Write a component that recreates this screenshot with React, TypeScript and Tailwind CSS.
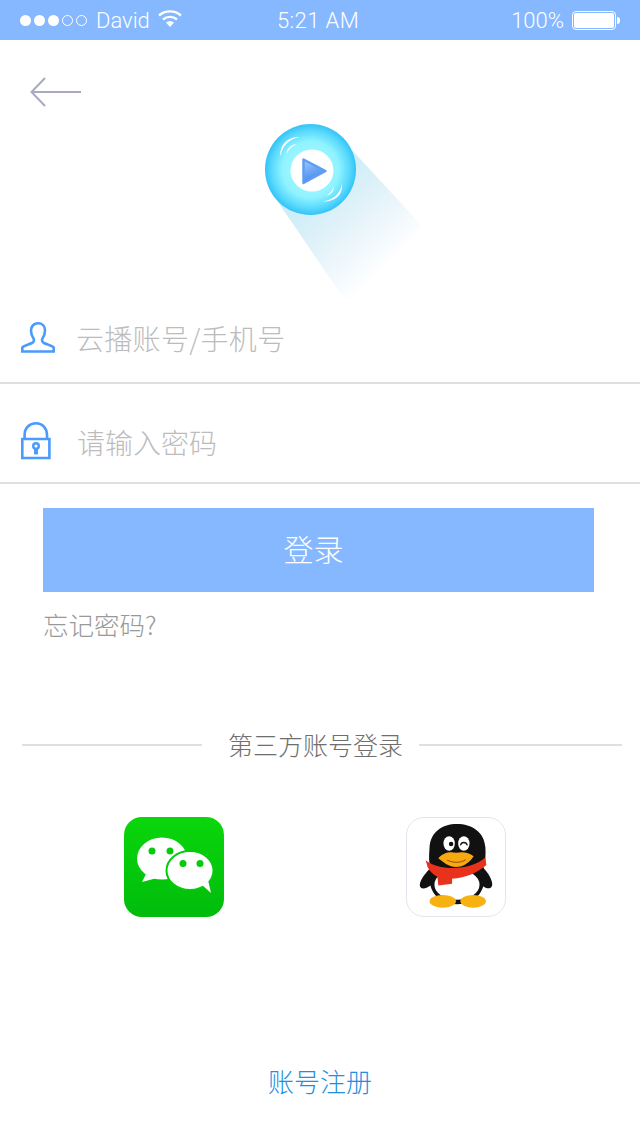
const CJK = "font-['Noto_Sans_CJK_SC','Liberation_Sans',sans-serif] font-light";

function StatusBar() {
  return (
    <div className="flex h-10 items-center bg-[#85b8ff] font-['Roboto','Liberation_Sans',sans-serif] text-[22px] font-light text-white">
      <div className="flex w-[200px] items-center pl-5">
        <div className="flex gap-[3px]">
          {[0, 1, 2].map((i) => (
            <span key={i} className="h-[11px] w-[11px] rounded-full bg-white" />
          ))}
          {[3, 4].map((i) => (
            <span key={i} className="h-[11px] w-[11px] rounded-full border border-white" />
          ))}
        </div>
        <span className="ml-[9px] mt-[2px] leading-none">David</span>
        <svg className="mb-[4px] ml-[8px]" width="24" height="18" viewBox="0 0 24 18" fill="none">
          <path d="M1 6.500C7 1 17 1 23 6.500" stroke="white" strokeWidth="2.400" />
          <path d="M5 10.500C9 7 15 7 19 10.500" stroke="white" strokeWidth="2.400" />
          <path d="M8 13.500C10.500 11.500 13.500 11.500 16 13.500L12 18Z" fill="white" />
        </svg>
      </div>
      <span className="ml-[77px] mt-[2px] leading-none tracking-[0.4px]">5:21 AM</span>
      <div className="ml-auto flex items-center pr-[20px]">
        <span className="mt-[2px] leading-none">100%</span>
        <div className="ml-[8px] h-[19px] w-[44px] rounded-[4px] border border-white p-[1px]">
          <div className="h-full w-full rounded-[2px] bg-white" />
        </div>
        <div className="ml-[1px] h-[7px] w-[3px] rounded-r-full bg-white" />
      </div>
    </div>
  );
}

function BackArrow() {
  return (
    <svg width="52" height="30" viewBox="0 0 52 30" fill="none" stroke="#a9a9c0" strokeWidth="2">
      <path d="M1 15H51" />
      <path d="M15 1L1.500 15L15 29" />
    </svg>
  );
}

function Logo() {
  return (
    <svg width="200" height="200" viewBox="240 110 200 200" className="ml-[240px]">
      <defs>
        <linearGradient id="beam" gradientUnits="userSpaceOnUse" x1="310" y1="185" x2="385" y2="270">
          <stop offset="0" stopColor="#c9edf8" />
          <stop offset="0.4" stopColor="#dff1f9" />
          <stop offset="1" stopColor="#ffffff" />
        </linearGradient>
        <radialGradient id="ball" cx="0.5" cy="0.5" r="0.5">
          <stop offset="0" stopColor="#b4f8ff" />
          <stop offset="0.62" stopColor="#8ff3ff" />
          <stop offset="0.86" stopColor="#58d8fc" />
          <stop offset="1" stopColor="#33c3f7" />
        </radialGradient>
        <linearGradient id="play" x1="0" y1="0" x2="0.35" y2="1">
          <stop offset="0" stopColor="#a5c9fa" />
          <stop offset="1" stopColor="#3f88ee" />
        </linearGradient>
      </defs>
      <path d="M352 150L422 226L346 302L278 202Z" fill="url(#beam)" />
      <circle cx="310.500" cy="169.500" r="45.500" fill="url(#ball)" />
      <ellipse cx="312" cy="170.500" rx="21.500" ry="21" fill="white" />
      <path
        d="M303.500 159.500L325.500 171L303.500 183Z"
        fill="url(#play)"
        stroke="#5f9df3"
        strokeWidth="2.500"
        strokeLinejoin="round"
      />
      <g fill="white">
        <path d="M280.500 156C279.500 145 287 137 299.500 137C289 139 282.500 146 280.500 156Z" />
        <path d="M286.500 154C286.500 148.500 291 144.500 297 144C292 146 288.500 149.500 286.500 154Z" />
        <path d="M342 184C343 195 335 202 322.500 201.500C333 200 340 194 342 184Z" />
        <path d="M334 186C334 191 331 195 326.500 195.500C330 193.500 332.500 190 334 186Z" />
      </g>
    </svg>
  );
}

function UserIcon() {
  return (
    <svg width="34" height="32" viewBox="0 0 34 32" fill="none" stroke="#4a9bfc" strokeWidth="2.600">
      <path d="M1.300 29.500V25.500C3 23.500 8 22.500 11 21C13 20 13.500 18 12.500 16.500C11 14.500 10 12 10 8.500C10 4 13 1.300 17 1.300C21 1.300 24 4 24 8.500C24 12 23 14.500 21.500 16.500C20.500 18 21 20 23 21C26 22.500 31 23.500 32.700 25.500V29.500Z" />
    </svg>
  );
}

function LockIcon() {
  return (
    <svg width="30" height="38" viewBox="0 0 30 38" fill="none">
      <path d="M1.300 17H28.400V36H1.300Z" stroke="#4a9bfc" strokeWidth="2.600" />
      <path d="M3.600 17V13C3.600 6 8.500 1.300 15 1.300C21.500 1.300 26 6 26 13V17" stroke="#4a9bfc" strokeWidth="2.600" />
      <circle cx="15" cy="24" r="4" fill="#4a9bfc" />
      <rect x="13" y="25" width="4" height="7.500" rx="1" fill="#4a9bfc" />
      <circle cx="15" cy="24" r="1.500" fill="white" />
    </svg>
  );
}

function WechatIcon() {
  return (
    <div className="h-[100px] w-[100px] overflow-hidden rounded-[18px] bg-gradient-to-b from-[#0bd60b] to-[#00bc0c]">
      <svg width="100" height="100" viewBox="0 0 100 100">
        <ellipse cx="38" cy="41.500" rx="25" ry="21" fill="white" />
        <path d="M22 57L18 65L33 61Z" fill="white" />
        <ellipse cx="66" cy="53.500" rx="23.500" ry="19.500" fill="white" stroke="#05cb0c" strokeWidth="2" />
        <path d="M77 67L87 76L84 63Z" fill="white" />
        <circle cx="28" cy="34" r="3.500" fill="#05cb0c" />
        <circle cx="46" cy="34" r="3.500" fill="#05cb0c" />
        <circle cx="59" cy="46.500" r="3.500" fill="#05cb0c" />
        <circle cx="76" cy="46.500" r="3.500" fill="#05cb0c" />
      </svg>
    </div>
  );
}

function QQIcon() {
  return (
    <div className="h-[100px] w-[100px] overflow-hidden rounded-[18px] border border-[#e2e6ec] bg-white">
      <svg width="98" height="98" viewBox="0 0 100 100">
        <path d="M25 50C19 56 13 63 13 69C14 74 20 72 25 68Z" fill="#111" />
        <path d="M77 50C83 56 87 63 87 68C86 74 80 72 76 68Z" fill="#111" />
        <path d="M23 30C24 14 36 6 51 6C66 6 79 14 80 30C80.500 38 80 44 78 50C83 72 72 88 51 88C30 88 19 72 24 50C22 44 22.500 38 23 30Z" fill="#111" />
        <ellipse cx="51" cy="68" rx="23" ry="15.500" fill="white" />
        <path d="M19 43C32 54 66 54 80 40L81 48C72 56 60 61 46 62L46 67L32 69L31 60C27 58 23 54 21 50Z" fill="#e8321c" />
        <ellipse cx="43" cy="26" rx="5.800" ry="7.500" fill="white" />
        <circle cx="45" cy="26.500" r="2.300" fill="#111" />
        <ellipse cx="58" cy="26" rx="5.800" ry="7.500" fill="white" />
        <path d="M54.500 28C55.500 24 60.500 24 61.500 28" fill="none" stroke="#111" strokeWidth="1.300" />
        <path d="M32 41C37 35 44 34 50 35.500C57 34 63 35 68 39C64 45 58 50 50 50C43 50 37 45 32 41Z" fill="#f7a90f" />
        <path d="M41 43C47 46 55 46 60 42.500" fill="none" stroke="#8a4a10" strokeWidth="1" />
        <ellipse cx="36.500" cy="85" rx="13.500" ry="6.500" fill="#f7b111" />
        <ellipse cx="67.500" cy="85" rx="13" ry="6.500" fill="#f7b111" />
      </svg>
    </div>
  );
}

export default function App() {
  return (
    <div className={`flex h-[1136px] w-[640px] flex-col bg-white ${CJK}`}>
      <StatusBar />
      <div className="pl-[30px] pt-[37px]">
        <BackArrow />
      </div>
      <div className="mt-[3px]">
        <Logo />
      </div>

      <div className="flex h-[74px] items-start gap-[21px] border-b-2 border-[#e0e0e0] pl-[21px] pt-[12px]">
        <UserIcon />
        <span className="-mt-[2px] text-[28px] leading-[36px] tracking-[0.3px] text-[#bcbcbc]">云播账号/手机号</span>
      </div>
      <div className="flex h-[100px] items-start gap-[26px] border-b-2 border-[#e0e0e0] pl-[21px] pt-[38px]">
        <LockIcon />
        <span className="mt-[2px] text-[28px] leading-[36px] text-[#bcbcbc]">请输入密码</span>
      </div>

      <div className="mt-[24px] pl-[43px] pr-[46px]">
        <div className="flex h-[84px] items-center justify-center bg-[#85b8ff] pb-[4px] pr-[10px] text-[30px] text-white">登录</div>
        <p className="mt-[16px] text-[25.5px] leading-[32px] text-[#999999]">忘记密码?</p>
      </div>

      <div className="mt-[88px] flex items-center pl-[22px] pr-[18px]">
        <div className="h-[2px] w-[180px] bg-[#e0e0e0]" />
        <span className="mb-[2px] ml-[26px] text-[25px] leading-[32px] text-[#6e6e6e]">第三方账号登录</span>
        <div className="ml-[16px] h-[2px] w-[203px] bg-[#e0e0e0]" />
      </div>

      <div className="mt-[55px] flex pl-[124px]">
        <WechatIcon />
        <div className="ml-[182px]">
          <QQIcon />
        </div>
      </div>

      <div className="mt-[148px] flex justify-center text-[26px] leading-[32px] text-[#1f8fdf]">账号注册</div>
    </div>
  );
}
